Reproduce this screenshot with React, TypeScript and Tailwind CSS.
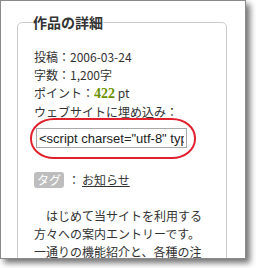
const jp = { fontFamily: '"Noto Sans CJK JP", "Noto Sans", sans-serif' };

const App = () => {
  return (
    <div className="h-[268px] w-[256px] bg-white" style={jp}>
      <div className="h-[259px] w-[246px] overflow-hidden border border-[#8a8a8a] bg-white shadow-[4px_4px_6px_rgba(0,0,0,0.55)]">
        <fieldset className="ml-[16px] mt-[11px] h-[300px] w-[210px] rounded-[5px] border border-[#cccccc] px-[16px] pt-[16px]">
          <legend className="ml-[-1px] text-[14px] font-bold leading-[20px] text-[#333]">
            作品の詳細
          </legend>

          <div className="text-[12px] leading-[18px] text-[#333]">
            <p>投稿：2006-03-24</p>
            <p>字数：1,200字</p>
            <p>
              ポイント：
              <span
                className="text-[14px] font-bold text-[#6b9200]"
                style={{ fontFamily: '"Liberation Serif", serif' }}
              >
                422
              </span>{" "}
              pt
            </p>
            <p>ウェブサイトに埋め込み：</p>
          </div>

          <div className="relative mt-[7px]">
            <input
              readOnly
              value={'<script charset="utf-8" type="text/javascript" src="">'}
              className="ml-[2px] block h-[20px] w-[151px] border border-[#a9a9a9] bg-white px-[2px] text-[13px] text-[#222] outline-none"
              style={{ fontFamily: '"Liberation Sans", Arial, sans-serif' }}
            />
            <div className="absolute left-[-4px] top-[-10px] h-[41px] w-[166px] rounded-[24px/20px] border-2 border-[#e0202c]" />
          </div>

          <div className="mt-[24px] flex items-center text-[12px] leading-[16px] text-[#333]">
            <span className="rounded-[3px] bg-[#bdbdbd] px-[3px] text-white">タグ</span>
            <span className="ml-[4px]">：</span>
            <a href="#" className="ml-[2px] underline">
              お知らせ
            </a>
          </div>

          <p className="mt-[19px] text-[12px] leading-[18px] text-[#333]">
            {"\u3000はじめて当サイトを利用する方々への案内エントリーです。一通りの機能紹介と、各種の注意事項をまとめています。"}
          </p>
        </fieldset>
      </div>
    </div>
  );
};

export default App;
